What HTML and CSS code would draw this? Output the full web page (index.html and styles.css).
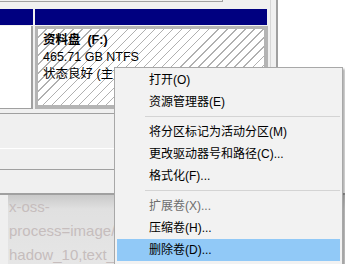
FILE: index.html
```html
<!DOCTYPE html>
<html>
<head>
  <meta charset="UTF-8">
  <title>磁盘管理</title>
  <link rel="stylesheet" href="styles.css">
</head>
<body>
  <div class="top">
    <div class="win">
      <div class="cap"><div class="listedge"></div></div>
      <div class="bars">
        <div class="bar bar-a"></div>
        <div class="bar bar-b"></div>
      </div>
      <div class="disk">
        <div class="info"></div>
        <div class="part">
          <div class="hatch">
            <div class="label">资料盘&nbsp;&nbsp;(F:)</div>
            <div>465.71 GB NTFS</div>
            <div>状态良好 (主分区)</div>
          </div>
        </div>
      </div>
      <div class="pane-a"></div>
      <div class="pane-b"></div>
    </div>
    <div class="edge"></div>
    <div class="rest"></div>
  </div>
  <div class="wm">
    <div class="wm-line">x-oss-</div>
    <div class="wm-line">process=image/</div>
    <div class="wm-line">hadow_10,text_</div>
  </div>

  <!-- 右键菜单 -->
  <div class="menu">
    <div class="item">打开(O)</div>
    <div class="item">资源管理器(E)</div>
    <div class="sep"></div>
    <div class="item">将分区标记为活动分区(M)</div>
    <div class="item">更改驱动器号和路径(C)...</div>
    <div class="item">格式化(F)...</div>
    <div class="sep"></div>
    <div class="item disabled">扩展卷(X)...</div>
    <div class="item">压缩卷(H)...</div>
    <div class="item active">删除卷(D)...</div>
    <div class="sep"></div>
  </div>
</body>
</html>
```

FILE: styles.css
```css
body {
  margin: 0;
  width: 345px;
  height: 264px;
  overflow: hidden;
  position: relative;
  background-color: #FFFFFF;
  font-family: "Liberation Sans", "Noto Sans CJK SC", sans-serif;
  font-size: 12px;
  color: #000000;
}

.top {
  display: flex;
  height: 193px;
}

.win {
  width: 270px;
  background-color: #F0F0F0;
}

.edge {
  width: 5px;
  background-color: #F0F0F0;
  border-left: 1px solid #D6D6D6;
  border-right: 2px solid #A0A0A0;
}

.rest {
  flex: 1;
  background-color: #FFFFFF;
}

.cap {
  height: 9px;
}

.listedge {
  width: 222px;
  height: 1px;
  border-bottom: 1px solid #A0A0A0;
  border-right: 1px solid #A0A0A0;
}

.bars {
  display: flex;
  gap: 2px;
  height: 16px;
}

.bar {
  background-color: #000080;
}

.bar-a {
  width: 33px;
}

.bar-b {
  width: 232px;
}

.disk {
  display: flex;
  gap: 2px;
  height: 84px;
}

.info {
  width: 33px;
  margin-top: 1px;
  height: 83px;
  box-sizing: border-box;
  background-color: #FFFFFF;
  border-right: 2px solid #A0A0A0;
  border-bottom: 1px solid #A0A0A0;
}

.part {
  width: 233px;
  box-sizing: border-box;
  margin-top: 1px;
  padding: 3px 4px 4px 3px;
  background-color: #B4B4B4;
}

.hatch {
  height: 100%;
  box-sizing: border-box;
  padding: 3px 0 0 5px;
  font-size: 12.5px;
  line-height: 17px;
  white-space: nowrap;
  overflow: hidden;
  background-color: #FFFFFF;
  background-image: repeating-linear-gradient(135deg, #FFFFFF 0px, #FFFFFF 5.4px, #B0B0B0 5.4px, #B0B0B0 6.4px);
}

.label {
  font-weight: bold;
}

.pane-a {
  margin-top: 4px;
  height: 34px;
  border-top: 1px solid #A0A0A0;
  border-bottom: 1px solid #FFFFFF;
}

.pane-b {
  height: 20px;
  border-bottom: 1px solid #A0A0A0;
}

.wm {
  height: 71px;
  box-sizing: border-box;
  border-top: 2px solid #A0A0A0;
  padding-left: 9px;
  background-image: linear-gradient(to right, #EFEFEF 8px, transparent 8px),
    linear-gradient(#C9C9C9, #E0E0E0 14px, #E6E6E6);
  color: #C6BDBD;
  font-size: 15px;
  line-height: 24px;
  white-space: nowrap;
  overflow: hidden;
}

.menu {
  position: absolute;
  left: 114px;
  top: 67px;
  width: 229px;
  box-sizing: border-box;
  padding: 1px 2px;
  background-color: #F2F2F2;
  border: 1px solid #A8A8A8;
  box-shadow: 2px 2px 2px rgba(0, 0, 0, 0.3);
}

.item {
  height: 22px;
  line-height: 22px;
  padding-left: 32px;
  white-space: nowrap;
}

.item.disabled {
  color: #6D6D6D;
}

.item.active {
  background-color: #91C9F7;
}

.sep {
  height: 8px;
  margin-left: 28px;
  background-image: linear-gradient(#D4D4D4, #D4D4D4);
  background-size: 100% 1px;
  background-position: 0 3px;
  background-repeat: no-repeat;
}
```
